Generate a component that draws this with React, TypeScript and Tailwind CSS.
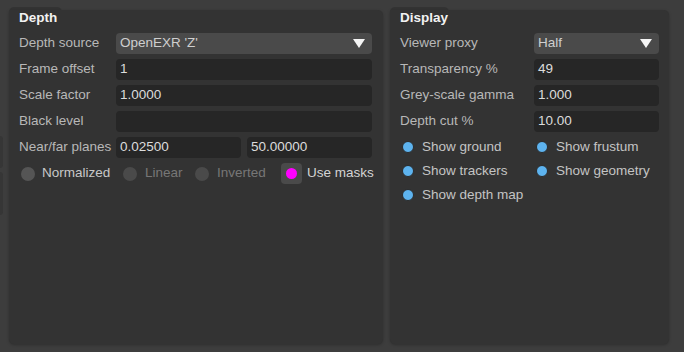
const font = { fontFamily: '"Liberation Sans", Arial, sans-serif' };

function Tab({ title, width }: { title: string; width: string }) {
  return (
    <>
      <div className={`h-[8px] ${width} rounded-t-[5px] bg-[#333333]`} />
      <div className="relative z-10 -mt-[5px] h-[16px] pl-[10px] text-[13.5px] leading-[16px] font-bold text-[#f2f2f2]">
        {title}
      </div>
    </>
  );
}

function Field({ value, dropdown }: { value: string; dropdown?: boolean }) {
  return (
    <div
      className={`flex h-[21px] flex-1 items-center justify-between rounded-[4px] pl-[4px] pr-[7px] text-[13.5px] ${
        dropdown ? 'bg-[#4a4a4a] text-[#cfcfcf]' : 'bg-[#262626] text-[#dcdcdc]'
      }`}
    >
      <span>{value}</span>
      {dropdown && (
        <svg width="12" height="9" viewBox="0 0 12 9">
          <path d="M0 0h12L6 9z" fill="#f5f5f5" />
        </svg>
      )}
    </div>
  );
}

function Row({ label, labelW, children }: { label: string; labelW: string; children: React.ReactNode }) {
  return (
    <div className="flex h-[21px] items-center">
      <div className={`${labelW} shrink-0 whitespace-nowrap text-[13.5px] text-[#b8b8b8]`}>{label}</div>
      <div className="flex flex-1 gap-[6px]">{children}</div>
    </div>
  );
}

function Check({ label }: { label: string }) {
  return (
    <div className="flex h-[24px] items-center gap-[8px]">
      <span className="h-[12px] w-[12px] rounded-full border border-[#2a2a2a] bg-[#5db3ef]" />
      <span className="whitespace-nowrap text-[13.5px] text-[#c4c4c4]">{label}</span>
    </div>
  );
}

export default function App() {
  return (
    <div style={font} className="flex h-[352px] w-[684px] gap-[7px] bg-[#3d3d3d] pt-[7px] pr-[15px] pb-[8px] pl-[9px]">
      {/* sliver of the neighbouring panel */}
      <div className="-ml-[9px] flex w-[3px] flex-col gap-[4px] pt-[129px]">
        <div className="h-[32px] rounded-r-[3px] bg-[#363636]" />
        <div className="h-[43px] rounded-r-[3px] bg-[#363636]" />
      </div>
      <div className="-ml-[1px] flex w-[374px] flex-col">
        <Tab title="Depth" width="w-[53px]" />
        <div className="-mt-[16px] flex flex-1 flex-col rounded-[5px] rounded-tl-none bg-[#333333] pt-[16px] pr-[11px] pl-[10px] shadow-[0_1px_3px_rgba(0,0,0,0.25)]">
          <div className="mt-[7px] flex flex-col gap-[5px]">
            <Row label="Depth source" labelW="w-[97px]">
              <Field value="OpenEXR 'Z'" dropdown />
            </Row>
            <Row label="Frame offset" labelW="w-[97px]">
              <Field value="1" />
            </Row>
            <Row label="Scale factor" labelW="w-[97px]">
              <Field value="1.0000" />
            </Row>
            <Row label="Black level" labelW="w-[97px]">
              <Field value="" />
            </Row>
            <Row label="Near/far planes" labelW="w-[97px]">
              <Field value="0.02500" />
              <Field value="50.00000" />
            </Row>
            <div className="flex h-[21px] items-center whitespace-nowrap text-[13.5px]">
              <div className="flex w-[104px] shrink-0 items-center">
                <span className="ml-[2px] h-[14px] w-[14px] rounded-full bg-[#555555]" />
                <span className="ml-[7px] text-[#c8c8c8]">Normalized</span>
              </div>
              <div className="flex w-[72px] shrink-0 items-center">
                <span className="h-[14px] w-[14px] rounded-full bg-[#4a4a4a]" />
                <span className="ml-[8px] text-[#777777]">Linear</span>
              </div>
              <div className="flex w-[86px] shrink-0 items-center">
                <span className="h-[14px] w-[14px] rounded-full bg-[#4a4a4a]" />
                <span className="ml-[8px] text-[#777777]">Inverted</span>
              </div>
              <span className="flex h-[21px] w-[21px] shrink-0 items-center justify-center rounded-[4px] bg-[#4a4a4a]">
                <span className="h-[11px] w-[11px] rounded-full bg-[#ff00ff]" />
              </span>
              <span className="ml-[5px] text-[#d4d4d4]">Use masks</span>
            </div>
          </div>
        </div>
      </div>
      <div className="flex w-[279px] flex-col">
        <Tab title="Display" width="w-[59px]" />
        <div className="-mt-[16px] flex flex-1 flex-col rounded-[5px] rounded-tl-none bg-[#333333] pt-[16px] pr-[10px] pl-[10px] shadow-[0_1px_3px_rgba(0,0,0,0.25)]">
          <div className="mt-[7px] flex flex-col gap-[5px]">
            <Row label="Viewer proxy" labelW="w-[134px]">
              <Field value="Half" dropdown />
            </Row>
            <Row label="Transparency %" labelW="w-[134px]">
              <Field value="49" />
            </Row>
            <Row label="Grey-scale gamma" labelW="w-[134px]">
              <Field value="1.000" />
            </Row>
            <Row label="Depth cut %" labelW="w-[134px]">
              <Field value="10.00" />
            </Row>
          </div>
          <div className="mt-[3px] grid grid-cols-[134px_1fr] pl-[2px]">
            <Check label="Show ground" />
            <Check label="Show frustum" />
            <Check label="Show trackers" />
            <Check label="Show geometry" />
            <Check label="Show depth map" />
          </div>
        </div>
      </div>
    </div>
  );
}
